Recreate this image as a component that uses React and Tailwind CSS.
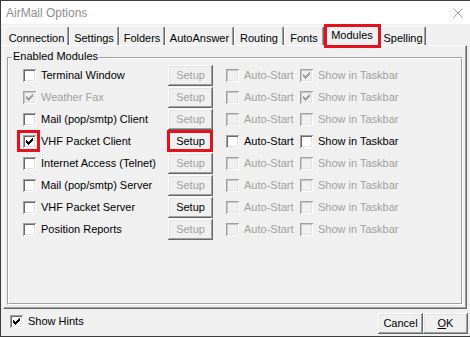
import React from 'react';

const tabs = [
    { name: 'Connection', w: 'w-[65px]' },
    { name: 'Settings', w: 'w-[50px]' },
    { name: 'Folders', w: 'w-[46px]' },
    { name: 'AutoAnswer', w: 'w-[69px]' },
    { name: 'Routing', w: 'w-[50px]' },
    { name: 'Fonts', w: 'w-[40px]' },
    { name: 'Modules', w: 'w-[56px]', active: true },
    { name: 'Spelling', w: 'w-[46px]' },
];

// enabled: main checkbox enabled, setup: setup button enabled, opts: auto-start / taskbar enabled
const modules = [
    { name: 'Terminal Window', checked: false, enabled: true, setup: false, opts: false, taskbar: true },
    { name: 'Weather Fax', checked: true, enabled: false, setup: false, opts: false, taskbar: true },
    { name: 'Mail (pop/smtp) Client', checked: false, enabled: true, setup: false, opts: false, taskbar: false },
    { name: 'VHF Packet Client', checked: true, enabled: true, setup: true, opts: true, taskbar: false, marked: true },
    { name: 'Internet Access (Telnet)', checked: false, enabled: true, setup: false, opts: false, taskbar: false },
    { name: 'Mail (pop/smtp) Server', checked: false, enabled: true, setup: false, opts: false, taskbar: false },
    { name: 'VHF Packet Server', checked: false, enabled: true, setup: true, opts: false, taskbar: false },
    { name: 'Position Reports', checked: false, enabled: true, setup: false, opts: false, taskbar: false },
];

const CheckBox = ({ checked, disabled, marked }) => (
    <span
        className={`relative block w-[13px] h-[13px] shrink-0 ${disabled
            ? 'bg-[#f0f0f0] shadow-[inset_1px_1px_0_#a0a0a0,inset_-1px_-1px_0_#ffffff,inset_2px_2px_0_#c8c8c8,inset_-2px_-2px_0_#e3e3e3]'
            : 'bg-white shadow-[inset_1px_1px_0_#a0a0a0,inset_-1px_-1px_0_#ffffff,inset_2px_2px_0_#696969,inset_-2px_-2px_0_#e3e3e3]'}`}
    >
        {checked && (
            <svg width="13" height="13" viewBox="0 0 13 13" className="absolute left-0 top-0" shapeRendering="crispEdges">
                <path
                    d="M3 5h1v3h-1z M4 6h1v3h-1z M5 7h1v3h-1z M6 6h1v3h-1z M7 5h1v3h-1z M8 4h1v3h-1z M9 3h1v3h-1z"
                    fill={disabled ? '#a0a0a0' : '#000'}
                />
            </svg>
        )}
        {marked && <span className="absolute -left-[6px] -top-[5px] -right-[4px] -bottom-[4px] border-[3px] border-[#e4121c]" />}
    </span>
);

const Button = ({ children, disabled, marked, className = '' }) => (
    <div
        className={`relative flex items-center justify-center h-[21px] bg-[#f0f0f0] shadow-[inset_-1px_-1px_0_#696969,inset_1px_1px_0_#ffffff,inset_-2px_-2px_0_#a0a0a0,inset_2px_2px_0_#e3e3e3] ${disabled ? 'text-[#a0a0a0]' : 'text-black'} ${className}`}
    >
        {children}
        {marked && <span className="absolute -left-[1px] -top-[1px] right-0 bottom-0 border-[3px] border-[#e4121c]" />}
    </div>
);

const Option = ({ label, checked, disabled, width }) => (
    <div className={`flex items-center ${width}`}>
        <CheckBox checked={checked} disabled={disabled} />
        <span className={`ml-[5px] ${disabled ? 'text-[#a0a0a0]' : 'text-black'}`}>{label}</span>
    </div>
);

const App = () => {
    return (
        <div className="w-[470px] h-[337px] flex flex-col overflow-hidden bg-[#f0f0f0] border-t border-l border-b border-[#3c3c3c] font-['Liberation_Sans',Arial,sans-serif] text-[11px] leading-[13px] text-black">
            {/* Title bar */}
            <div className="h-[23px] shrink-0 bg-white flex items-center justify-between pl-[5px] pr-[7px]">
                <span className="text-[12px] leading-[14px] text-[#8e8e8e]">AirMail Options</span>
                <svg width="10" height="10" viewBox="0 0 10 10">
                    <path d="M0.5 0.5L9.5 9.5M9.5 0.5L0.5 9.5" stroke="#9a9a9a" strokeWidth="1" />
                </svg>
            </div>

            <div className="px-[2px] pr-[3px]">
                {/* Tab strip */}
                <div className="h-[21px] flex items-end pl-[1px]">
                    {tabs.map((tab) =>
                        tab.active ? (
                            <div
                                key={tab.name}
                                className={`relative z-10 -mb-px h-[22px] ${tab.w} flex justify-center pt-[4px] bg-[#f0f0f0] border-t border-l border-r border-t-white border-l-white border-r-[#696969] rounded-t-[2px] shadow-[inset_-1px_0_0_#a0a0a0]`}
                            >
                                {tab.name}
                                <span className="absolute left-[-1px] top-[-1px] -right-[2px] -bottom-[2px] border-[3px] border-[#e4121c]" />
                            </div>
                        ) : (
                            <div
                                key={tab.name}
                                className={`h-[19px] ${tab.w} flex justify-center pt-[5px] border-t border-l border-r border-t-white border-l-white border-r-[#696969] rounded-t-[2px] shadow-[inset_-1px_0_0_#a0a0a0]`}
                            >
                                {tab.name}
                            </div>
                        )
                    )}
                </div>

                {/* Tab page */}
                <div className="h-[264px] border border-t-white border-l-white border-r-[#696969] border-b-[#696969] shadow-[inset_-1px_-1px_0_#a0a0a0] pt-[11px] px-[3px]">
                    <div className="relative h-[248px] border border-t-[#a0a0a0] border-l-[#a0a0a0] border-r-white border-b-white">
                        <div className="h-full border border-t-white border-l-white border-r-[#a0a0a0] border-b-[#a0a0a0] pt-[5px] pl-[14px]">
                            {modules.map((m) => (
                                <div key={m.name} className="h-[22px] flex items-center">
                                    <div className="w-[145px] flex items-center">
                                        <CheckBox checked={m.checked} disabled={!m.enabled} marked={m.marked} />
                                        <span className={`ml-[5px] ${m.enabled ? 'text-black' : 'text-[#a0a0a0]'}`}>{m.name}</span>
                                    </div>
                                    <Button disabled={!m.setup} marked={m.marked} className="w-[45px]">Setup</Button>
                                    <div className="ml-[13px] flex items-center">
                                        <Option label="Auto-Start" checked={false} disabled={!m.opts} width="w-[74px]" />
                                        <Option label="Show in Taskbar" checked={m.taskbar} disabled={!m.opts} width="" />
                                    </div>
                                </div>
                            ))}
                        </div>
                        <span className="absolute left-[4px] top-[-8px] px-[1px] bg-[#f0f0f0]">Enabled Modules</span>
                    </div>
                </div>
            </div>

            {/* Bottom bar */}
            <div className="flex-1 flex items-start pt-[4px] pl-[9px] pr-[2px]">
                <div className="mt-[2px] flex items-center">
                    <CheckBox checked />
                    <span className="ml-[5px]">Show Hints</span>
                </div>
                <div className="ml-auto flex">
                    <Button className="w-[45px]">Cancel</Button>
                    <Button className="w-[45px]">
                        <span><span className="underline underline-offset-[1px]">O</span>K</span>
                    </Button>
                </div>
            </div>
        </div>
    );
};

export default App;
